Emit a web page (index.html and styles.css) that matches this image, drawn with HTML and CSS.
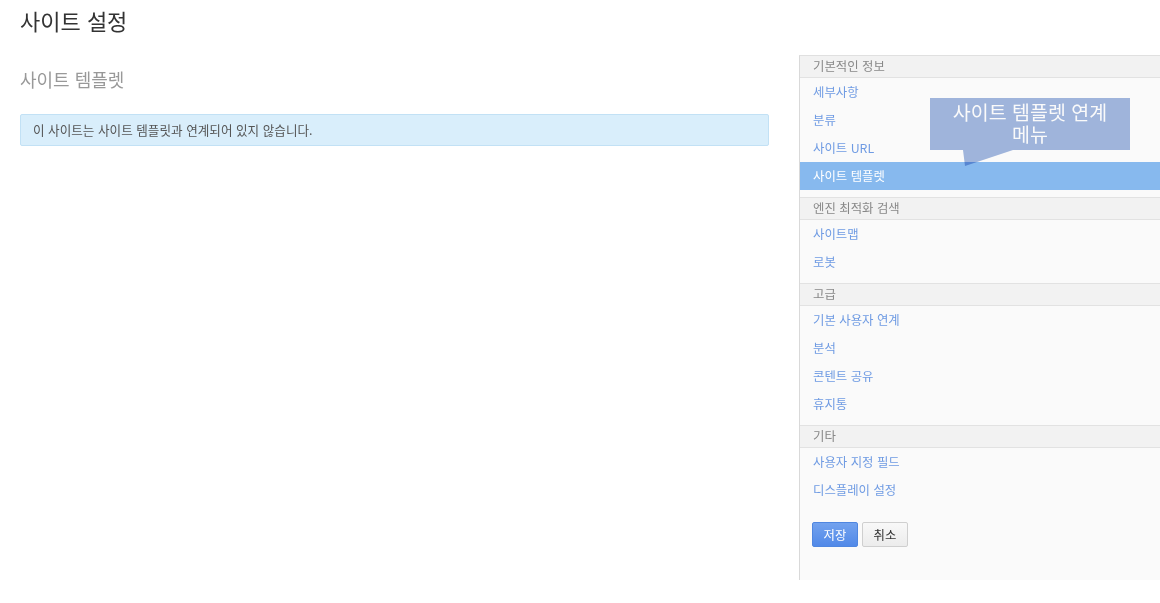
FILE: index.html
```html
<!DOCTYPE html>
<html lang="ko">
<head>
<meta charset="utf-8">
<title>사이트 설정</title>
<link rel="stylesheet" href="styles.css">
</head>
<body>
<div class="page">
  <header class="page-head"><h1 class="page-title">사이트 설정</h1></header>
  <div class="layout">
    <main class="main">
      <h2 class="sub-title">사이트 템플렛</h2>
      <div class="alert">이 사이트는 사이트 템플릿과 연계되어 있지 않습니다.</div>
    </main>
    <aside class="sidebar">
      <section class="group">
        <div class="group-head">기본적인 정보</div>
        <a class="item">세부사항</a>
        <a class="item">분류</a>
        <a class="item">사이트 URL</a>
        <a class="item active">사이트 템플렛</a>
      </section>
      <section class="group">
        <div class="group-head">엔진 최적화 검색</div>
        <a class="item">사이트맵</a>
        <a class="item">로봇</a>
      </section>
      <section class="group">
        <div class="group-head">고급</div>
        <a class="item">기본 사용자 연계</a>
        <a class="item">분석</a>
        <a class="item">콘텐트 공유</a>
        <a class="item">휴지통</a>
      </section>
      <section class="group">
        <div class="group-head">기타</div>
        <a class="item">사용자 지정 필드</a>
        <a class="item">디스플레이 설정</a>
      </section>
      <div class="actions">
        <button class="btn btn-primary">저장</button>
        <button class="btn">취소</button>
      </div>
      <div class="callout">
        <div class="callout-box"><div class="callout-line">사이트 템플렛 연계</div><div class="callout-line">메뉴</div></div>
        <svg class="callout-tail" width="52" height="16" viewBox="0 0 52 16"><polygon points="0,0 50,0 2,16"/></svg>
      </div>
    </aside>
  </div>
</div>
</body>
</html>
```

FILE: styles.css
```css
* { box-sizing: border-box; }
html, body { margin: 0; padding: 0; background: #fff; }
body {
  font-family: "Noto Sans CJK KR", "Noto Sans", "Liberation Sans", sans-serif;
  color: #333;
  width: 1160px;
  height: 603px;
  overflow: hidden;
}
.page-head { padding: 5px 20px 0; height: 55px; }
.page-title { margin: 0; font-size: 22px; font-weight: 400; color: #333; line-height: 30px; }
.layout { display: flex; gap: 30px; }
.main { width: 769px; padding-left: 20px; }
.sub-title { margin: 12px 0 0; font-size: 18px; font-weight: 400; color: #999; line-height: 25px; }
.alert {
  margin-top: 22px;
  height: 32px;
  padding: 0 12px;
  background: #d9eefb;
  border: 1px solid #c2e1f5;
  border-radius: 2px;
  font-size: 12.6px;
  line-height: 29px;
  color: #555;
}
.sidebar {
  position: relative;
  flex: 1;
  height: 525px;
  background: #fafafa;
  border-left: 1px solid #d9d9d9;
  border-top: 1px solid #e0e0e0;
  display: flex;
  flex-direction: column;
}
.group { display: flex; flex-direction: column; padding-bottom: 7px; }
.group + .group { border-top: 1px solid #e2e2e2; }
.group-head {
  height: 22px;
  padding-left: 13px;
  background: #f2f2f2;
  border-bottom: 1px solid #e2e2e2;
  font-size: 12.4px;
  line-height: 21px;
  color: #888;
}
.item {
  display: block;
  height: 28px;
  padding-left: 13px;
  font-size: 12.4px;
  line-height: 29px;
  color: #6f9be3;
  text-decoration: none;
}
.item.active { background: #87b9ee; color: #fff; }
.actions { display: flex; gap: 4px; padding: 11px 0 0 12px; }
.btn {
  width: 46px;
  height: 25px;
  padding: 0;
  font-family: inherit;
  font-size: 12.4px;
  color: #333;
  background: linear-gradient(#f8f8f8, #ececec);
  border: 1px solid #cfcfcf;
  border-radius: 2px;
}
.btn-primary {
  color: #fff;
  background: linear-gradient(#73a2ee, #5189e8);
  border-color: #4f86e0;
}
.callout {
  position: absolute;
  left: 130px;
  top: 42px;
  width: 200px;
  mix-blend-mode: multiply;
}
.callout-box {
  height: 52px;
  background: #a2b8e0;
  color: #fff;
  font-size: 19.5px;
  text-align: center;
  padding-top: 3px;
}
.callout-line { height: 22px; line-height: 22px; }
.callout-tail { display: block; margin-left: 33px; fill: #a2b8e0; }
```
